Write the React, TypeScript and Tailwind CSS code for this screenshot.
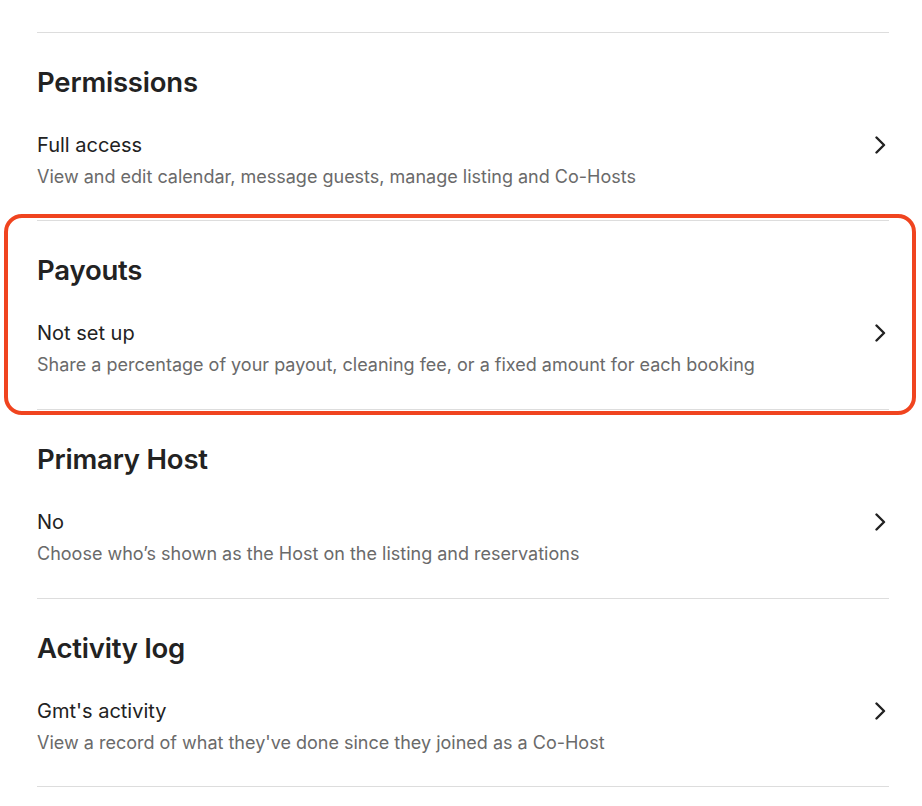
import React from "react";

function Chevron() {
  return (
    <svg width="12" height="18" viewBox="0 0 12 18" fill="none" className="mr-[3px] mt-[3px] shrink-0">
      <polyline points="2.5,1.5 10,9 2.5,16.5" stroke="#222222" strokeWidth="2.4" strokeLinecap="round" strokeLinejoin="round" />
    </svg>
  );
}

function Section({
  heading,
  title,
  desc,
  highlight,
  tall,
}: {
  heading: string;
  title: string;
  desc: string;
  highlight?: boolean;
  tall?: boolean;
}) {
  return (
    <div className={`relative border-t border-[#dddddd] pt-[34px] ${tall ? "h-[189px]" : "h-[188px]"}`}>
      {highlight && (
        <div className="pointer-events-none absolute left-[-33px] right-[-27px] top-[-7px] bottom-[-6px] rounded-[18px] border-4 border-[#f0441f]" />
      )}
      <h2 className="text-[27.5px] leading-[30px] font-semibold text-[#222222] tracking-[-0.2px]">{heading}</h2>
      <div className="mt-[36px] flex items-start justify-between">
        <div>
          <div className="text-[20px] leading-[24px] text-[#222222]">{title}</div>
          <div className="mt-[9px] text-[18px] leading-[22px] text-[#6a6a6a]">{desc}</div>
        </div>
        <Chevron />
      </div>
    </div>
  );
}

export default function App() {
  return (
    <div className="min-h-[806px] bg-white pt-[32px] pl-[37px] pr-[33px]" style={{ fontFamily: "Inter, 'Noto Sans', sans-serif" }}>
      <Section
        heading="Permissions"
        title="Full access"
        desc="View and edit calendar, message guests, manage listing and Co-Hosts"
      />
      <Section
        heading="Payouts"
        title="Not set up"
        desc="Share a percentage of your payout, cleaning fee, or a fixed amount for each booking"
        highlight
        tall
      />
      <Section
        heading="Primary Host"
        title="No"
        desc="Choose who’s shown as the Host on the listing and reservations"
        tall
      />
      <Section
        heading="Activity log"
        title="Gmt's activity"
        desc="View a record of what they've done since they joined as a Co-Host"
      />
      <div className="border-t border-[#dddddd]" />
    </div>
  );
}
